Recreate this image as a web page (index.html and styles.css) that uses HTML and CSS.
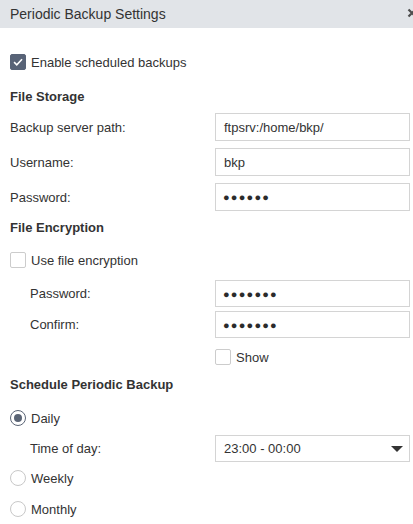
FILE: index.html
```html
<!DOCTYPE html>
<html>
<head>
<meta charset="utf-8">
<link rel="stylesheet" href="styles.css">
</head>
<body>
<div class="dialog">
  <div class="header">
    <span class="title">Periodic Backup Settings</span>
    <svg class="close" width="10" height="10" viewBox="0 0 10 10"><path d="M1.5 1.5 L8.5 8.5 M8.5 1.5 L1.5 8.5" stroke="#4d4d4d" stroke-width="2.2" fill="none"/></svg>
  </div>
  <div class="content">
    <label class="check-row enable">
      <span class="box checked"><svg width="16" height="16" viewBox="0 0 16 16"><path d="M3.5 8.2 L6.6 11.2 L12.6 4.8" fill="none" stroke="#fff" stroke-width="1.8"/></svg></span>
      <span>Enable scheduled backups</span>
    </label>

    <div class="heading h-storage">File Storage</div>
    <div class="form-row r1"><span class="label">Backup server path:</span><div class="field">ftpsrv:/home/bkp/</div></div>
    <div class="form-row r2"><span class="label">Username:</span><div class="field">bkp</div></div>
    <div class="form-row r2"><span class="label">Password:</span><div class="field dots">●●●●●●</div></div>

    <div class="heading h-enc">File Encryption</div>
    <label class="check-row use-enc">
      <span class="box"></span>
      <span>Use file encryption</span>
    </label>
    <div class="form-row r-enc1 sub"><span class="label">Password:</span><div class="field dots small">●●●●●●●</div></div>
    <div class="form-row r-enc2 sub"><span class="label">Confirm:</span><div class="field dots small">●●●●●●●</div></div>
    <label class="check-row show">
      <span class="box"></span>
      <span>Show</span>
    </label>

    <div class="heading h-sched">Schedule Periodic Backup</div>
    <label class="check-row daily">
      <span class="radio on"><span class="dot"></span></span>
      <span>Daily</span>
    </label>
    <div class="form-row r-time sub"><span class="label">Time of day:</span><div class="field select small"><span>23:00 - 00:00</span><span class="caret"></span></div></div>
    <label class="check-row weekly">
      <span class="radio"></span>
      <span>Weekly</span>
    </label>
    <label class="check-row monthly">
      <span class="radio"></span>
      <span>Monthly</span>
    </label>
  </div>
</div>
</body>
</html>
```

FILE: styles.css
```css
html, body {
  margin: 0;
  padding: 0;
  background: #fff;
  overflow: hidden;
}
body {
  font-family: "Liberation Sans", Arial, sans-serif;
  font-size: 13px;
  color: #333;
}
.dialog {
  width: 413px;
}
.header {
  height: 28px;
  background: #e1e4e8;
  display: flex;
  align-items: center;
  padding-left: 10px;
}
.title {
  font-size: 14px;
  color: #333;
}
.close {
  margin-left: auto;
  margin-right: -4px;
  margin-top: -3px;
  display: block;
  flex: none;
}
.content {
  padding: 0 3px 0 10px;
  display: flex;
  flex-direction: column;
}
.check-row {
  display: flex;
  align-items: center;
  height: 16px;
  gap: 5px;
}
.box {
  width: 14px;
  height: 14px;
  border: 1px solid #ccc;
  border-radius: 2px;
  background: #fff;
  display: flex;
  align-items: center;
  justify-content: center;
  box-sizing: content-box;
}
.box.checked {
  background: #586377;
  border-color: #586377;
}
.box svg { display: block; width: 14px; height: 14px; }
.radio {
  width: 14px;
  height: 14px;
  border: 1px solid #c8c8c8;
  border-radius: 50%;
  display: flex;
  align-items: center;
  justify-content: center;
}
.radio.on {
  border-color: #5a6475;
}
.radio .dot {
  width: 8px;
  height: 8px;
  border-radius: 50%;
  background: #5a6475;
}
.heading {
  font-weight: bold;
  height: 16px;
  line-height: 16px;
}
.form-row {
  display: flex;
  align-items: center;
}
.label {
  width: 205px;
  flex: none;
}
.form-row.sub .label {
  padding-left: 20px;
  width: 185px;
}
.field {
  width: 195px;
  height: 28px;
  box-sizing: border-box;
  border: 1px solid #d4d4d4;
  padding: 0 8px;
  display: flex;
  align-items: center;
  color: #333;
}
.field.small { height: 27px; }
.dots {
  font-size: 11px;
  letter-spacing: 1.2px;
  color: #2b2b2b;
  padding-left: 7px;
}
.select {
  justify-content: space-between;
  padding-right: 6px;
}
.caret {
  width: 0;
  height: 0;
  border-left: 6px solid transparent;
  border-right: 6px solid transparent;
  border-top: 6px solid #333;
}

.enable { margin-top: 26px; }
.h-storage { margin-top: 19px; }
.r1 { margin-top: 8px; }
.r2 { margin-top: 7px; }
.h-enc { margin-top: 9px; }
.use-enc { margin-top: 16px; }
.r-enc1 { margin-top: 12px; }
.r-enc2 { margin-top: 4px; }
.show { margin-top: 11px; margin-left: 205px; }
.h-sched { margin-top: 12px; }
.daily { margin-top: 17px; }
.r-time { margin-top: 9px; }
.weekly { margin-top: 8px; }
.monthly { margin-top: 15px; }
```
